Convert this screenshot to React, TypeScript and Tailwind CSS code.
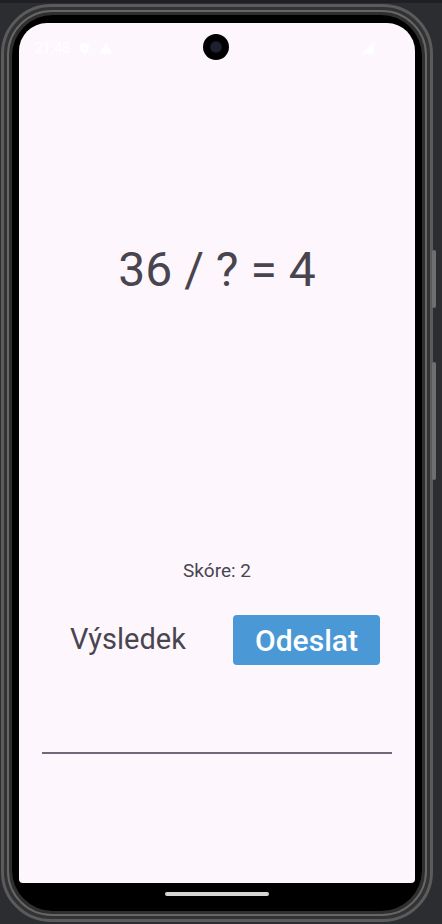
import { useState } from "react";

function StatusBar() {
    return (
        <div className="relative flex h-[48px] items-center justify-between px-[16px] pt-[2px] text-white">
            <div className="flex items-center gap-[8px]">
                <span className="text-[14px]">21:48</span>
                <svg width="13" height="13" viewBox="0 0 24 24" fill="white">
                    <path d="M12 2 4 5v6c0 5 3.4 9.7 8 11 4.6-1.3 8-6 8-11V5l-8-3zm-2 14V8l6 4-6 4z" />
                </svg>
                <svg width="14" height="13" viewBox="0 0 24 24" fill="white">
                    <path d="M1 21h22L12 2 1 21zm12-3h-2v-2h2v2zm0-4h-2v-4h2v4z" />
                </svg>
            </div>
            <div className="absolute left-[184px] top-[11px] flex size-[26px] items-center justify-center rounded-full bg-black">
                <div className="size-[10px] rounded-full bg-[#1d2030] shadow-[0_0_2px_#4a4a7a]" />
            </div>
            <svg width="14" height="14" viewBox="0 0 24 24" fill="white" className="mr-[24px]">
                <path d="M2 22h20V2z" />
            </svg>
        </div>
    );
}

export default function App() {
    const [score] = useState(2);
    const [answer, setAnswer] = useState("");

    return (
        <div className="relative h-[924px] w-[442px] overflow-hidden border-t-[3px] border-[#1f2023] bg-[#2c2d31] font-['Roboto',sans-serif]">
            {/* side buttons */}
            <div className="absolute left-[432px] top-[247px] h-[58px] w-[4px] rounded-sm bg-[#6f6f6f]" />
            <div className="absolute left-[432px] top-[359px] h-[118px] w-[4px] rounded-sm bg-[#6f6f6f]" />

            <div className="ml-[1px] mt-[1px] h-[918px] w-[432px] rounded-[50px] border-[3px] border-[#5b5b5b] bg-[#333335] p-[3px]">
                <div className="h-full rounded-[45px] border-2 border-[#666] bg-[#2f2f2f] p-[3px]">
                    <div className="flex h-full flex-col rounded-[41px] bg-black px-[7px] pt-[8px]">
                        <div className="flex h-[860px] flex-col overflow-hidden rounded-t-[28px] rounded-b-[4px] bg-[#fdf7fd]">
                            <StatusBar />

                            <p className="mt-[169px] text-center text-[48px] leading-[60px] text-[#49454f]">
                                36 / ? = 4
                            </p>

                            <p className="mt-[259px] text-center text-[19px] leading-[24px] text-[#49454f]">
                                Skóre: {score}
                            </p>

                            <div className="mt-[32px] flex h-[50px] items-center pl-[51px]">
                                <span className="w-[163px] text-[29px] text-[#49454f]">Výsledek</span>
                                <button className="flex h-[50px] w-[147px] items-center justify-center rounded-[4px] bg-[#4a98d6] text-[30px] font-medium text-white">
                                    Odeslat
                                </button>
                            </div>

                            <input
                                value={answer}
                                onChange={(e) => setAnswer(e.target.value)}
                                className="mx-[23px] mt-[65px] h-[24px] border-b-2 border-[#6f6a7a] bg-transparent outline-none"
                            />
                        </div>
                        <div className="mx-auto mt-[9px] h-[4px] w-[104px] rounded-full bg-[#d6d6d6]" />
                    </div>
                </div>
            </div>
        </div>
    );
}
